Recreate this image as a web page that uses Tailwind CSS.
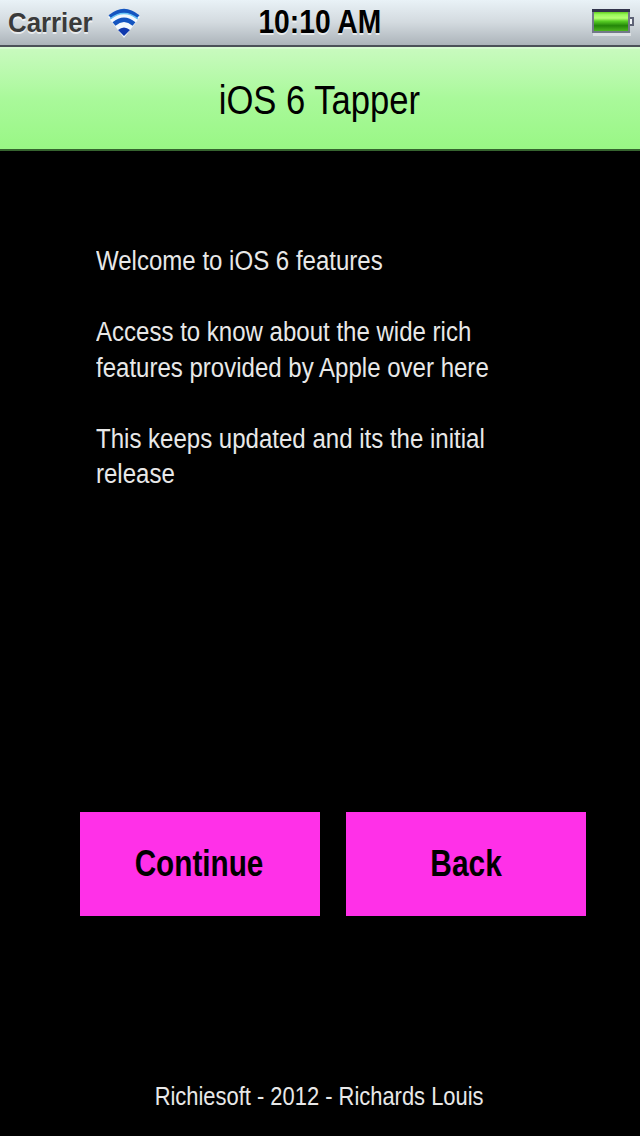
<!DOCTYPE html>
<html lang="en">
<head>
<meta charset="utf-8">
<title>iOS 6 Tapper</title>
<script src="https://cdn.jsdelivr.net/npm/@tailwindcss/browser@4"></script>
</head>
<body class="bg-black">
<div class="flex h-[1136px] w-[640px] flex-col overflow-hidden bg-black font-['Liberation_Sans',Arial,sans-serif]">
  <header class="grid h-[47px] grid-cols-[1fr_auto_1fr] border-b-2 border-[#4b5058] bg-linear-to-b from-[#e9f2f7] via-[#d3dadf] to-[#acb4ba] [text-shadow:0_2px_0_rgba(255,255,255,.65)]">
    <div class="flex pl-2">
      <span class="mt-[7px] w-[99px] origin-left scale-x-[.922] text-[28px] leading-8 font-bold whitespace-nowrap text-[#3a3a3a]">Carrier</span>
      <svg class="mt-2" width="34" height="30" viewBox="0 0 34 30" fill="none">
        <path d="M1 9Q17-4 33 9L17 30Z" fill="#f2f8fd"/>
        <path d="M3 9Q17-3 31 9" stroke="#1455c0" stroke-width="4.5"/>
        <path d="M3 11Q17 0 31 11" stroke="#69c5f5" stroke-width="1.5"/>
        <path d="M7 16Q17 7.500 27 16" stroke="#1455c0" stroke-width="4.5"/>
        <path d="M11 22Q17 17 23 22L17 28Z" fill="#1039ad"/>
      </svg>
    </div>
    <span class="mt-1 inline-block scale-x-[.855] text-[33px] leading-9 font-bold whitespace-nowrap">10:10 AM</span>
    <svg class="mt-2 mr-[5px] justify-self-end" width="43" height="30" viewBox="0 0 43 30">
      <defs><linearGradient id="battery" x2="0" y2="1"><stop stop-color="#63ce20"/><stop offset=".14" stop-color="#9af85b"/><stop offset=".32" stop-color="#b7ff74"/><stop offset=".48" stop-color="#58cf25"/><stop offset=".72" stop-color="#248609"/><stop offset="1" stop-color="#4db51e"/></linearGradient></defs>
      <path d="M1 25H39V28H1Z" fill="#dce0e3"/>
      <path d="M0 1H38V25H0Z" fill="#737989"/>
      <path d="M0 1H38V4H0Z" fill="#31334b"/>
      <path d="M2 4H36V23H2Z" fill="url(#battery)"/>
      <path d="M38 10H41V17H38" fill="#f1f4f6" stroke="#5e6376" stroke-width="2"/>
    </svg>
  </header>
  <h1 class="flex h-[104px] items-center justify-center border-t-2 border-b-2 border-t-[#d6fbd0] border-b-[#36642f] bg-linear-to-b from-[#c8fabe] via-[#a9f99a] to-[#99f785] text-[40px] leading-none"><span class="mt-px mr-[2px] inline-block scale-x-[.865] whitespace-nowrap">iOS 6 Tapper</span></h1>
  <main class="flex flex-1 flex-col text-white">
    <div class="mt-[93px] ml-24 h-[568px] w-[480px] origin-left scale-x-[.89] text-[27px] leading-[35.500px] text-[#e8e8e8]">
      <p>Welcome to iOS 6 features</p>
      <p class="mt-[35.500px]">Access to know about the wide rich<br>features provided by Apple over here</p>
      <p class="mt-[35.500px]">This keeps updated and its the initial<br>release</p>
    </div>
    <div class="ml-20 flex gap-[26px]">
      <button class="h-26 w-60 bg-[#ff30e8] text-[36px] leading-none font-bold text-black"><span class="mr-[3px] inline-block scale-x-[.825]">Continue</span></button>
      <button class="h-26 w-60 bg-[#ff30e8] text-[36px] leading-none font-bold text-black"><span class="inline-block scale-x-[.83]">Back</span></button>
    </div>
    <footer class="mt-auto mb-6 flex justify-center text-[26px] leading-8 text-[#e8e8e8]"><span class="mr-[2px] inline-block scale-x-[.843] whitespace-nowrap">Richiesoft - 2012 - Richards Louis</span></footer>
  </main>
</div>
</body>
</html>
